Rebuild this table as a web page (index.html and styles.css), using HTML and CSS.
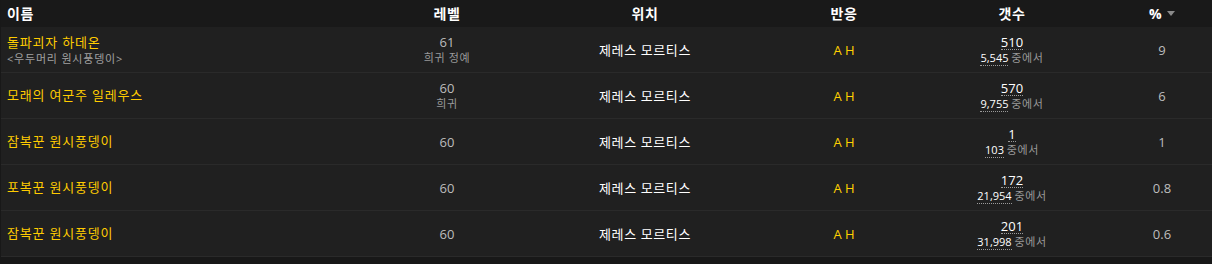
FILE: index.html
```html
<!DOCTYPE html>
<html lang="ko">
<head>
<meta charset="utf-8">
<link rel="stylesheet" href="styles.css">
</head>
<body>
<div class="table">
  <div class="row head">
    <div class="c name">이름</div>
    <div class="c center">레벨</div>
    <div class="c center">위치</div>
    <div class="c center">반응</div>
    <div class="c center">갯수</div>
    <div class="c center pct-h">%<span class="arrow"></span></div>
  </div>

  <div class="row">
    <div class="c name"><div class="npc">돌파괴자 하데온</div><div class="sub">&lt;우두머리 원시풍뎅이&gt;</div></div>
    <div class="c center lvl"><div>61</div><div class="small ko">희귀 정예</div></div>
    <div class="c center loc">제레스 모르티스</div>
    <div class="c center react">A H</div>
    <div class="c center cnt"><div><span class="dot">510</span></div><div class="small"><span class="dot w">5,545</span> <span class="ko">중에서</span></div></div>
    <div class="c center pct">9</div>
  </div>

  <div class="row">
    <div class="c name"><div class="npc">모래의 여군주 일레우스</div></div>
    <div class="c center lvl"><div>60</div><div class="small ko">희귀</div></div>
    <div class="c center loc">제레스 모르티스</div>
    <div class="c center react">A H</div>
    <div class="c center cnt"><div><span class="dot">570</span></div><div class="small"><span class="dot w">9,755</span> <span class="ko">중에서</span></div></div>
    <div class="c center pct">6</div>
  </div>

  <div class="row">
    <div class="c name"><div class="npc">잠복꾼 원시풍뎅이</div></div>
    <div class="c center lvl"><div>60</div></div>
    <div class="c center loc">제레스 모르티스</div>
    <div class="c center react">A H</div>
    <div class="c center cnt"><div><span class="dot">1</span></div><div class="small"><span class="dot w">103</span> <span class="ko">중에서</span></div></div>
    <div class="c center pct">1</div>
  </div>

  <div class="row">
    <div class="c name"><div class="npc">포복꾼 원시풍뎅이</div></div>
    <div class="c center lvl"><div>60</div></div>
    <div class="c center loc">제레스 모르티스</div>
    <div class="c center react">A H</div>
    <div class="c center cnt"><div><span class="dot">172</span></div><div class="small"><span class="dot w">21,954</span> <span class="ko">중에서</span></div></div>
    <div class="c center pct">0.8</div>
  </div>

  <div class="row">
    <div class="c name"><div class="npc">잠복꾼 원시풍뎅이</div></div>
    <div class="c center lvl"><div>60</div></div>
    <div class="c center loc">제레스 모르티스</div>
    <div class="c center react">A H</div>
    <div class="c center cnt"><div><span class="dot">201</span></div><div class="small"><span class="dot w">31,998</span> <span class="ko">중에서</span></div></div>
    <div class="c center pct">0.6</div>
  </div>
</div>
</body>
</html>
```

FILE: styles.css
```css
html, body {
  margin: 0;
  padding: 0;
  background: #181818;
}
body {
  font-family: "Open Sans", "Noto Sans CJK KR", sans-serif;
  font-size: 13px;
  color: #fff;
}
.table {
  margin-left: 1px;
  width: 1211px;
}
.row {
  display: grid;
  grid-template-columns: 371px 150px 246px 152px 184px 108px;
  height: 45px;
  background: #202020;
  border-bottom: 1px solid #2a2a2a;
}
.row.head {
  height: 27px;
  background: #191919;
  border-bottom: none;
  font-size: 14px;
  font-weight: 700;
  color: #fff;
  letter-spacing: 0.5px;
}
.c {
  display: flex;
  flex-direction: column;
  justify-content: center;
  line-height: 16px;
}
.name {
  padding-left: 6px;
  align-items: flex-start;
}
.center {
  align-items: center;
  text-align: center;
}
.npc {
  color: #ffcc00;
  line-height: 17px;
  letter-spacing: 0.8px;
}
.sub {
  color: #a0a0a0;
  font-size: 11px;
  line-height: 15px;
  letter-spacing: 0.8px;
}
.lvl {
  color: #bdbdbd;
}
.small {
  font-size: 11px;
  line-height: 15px;
  color: #9a9a9a;
}
.ko {
  letter-spacing: 0.6px;
}
.loc {
  color: #fff;
  letter-spacing: 0.6px;
}
.react {
  color: #ffd100;
  padding-top: 1px;
}
.cnt {
  color: #fff;
}
.dot {
  border-bottom: 1px dotted #9a9a9a;
  line-height: 14px;
  display: inline-block;
}
.dot.w {
  color: #fff;
}
.pct {
  color: #bdbdbd;
  padding-left: 8px;
}
.pct-h {
  flex-direction: row;
  justify-content: center;
  padding-left: 8px;
}
.arrow {
  display: inline-block;
  width: 0;
  height: 0;
  margin-left: 5px;
  border-left: 4px solid transparent;
  border-right: 4px solid transparent;
  border-top: 5px solid #8a8a8a;
}
```
